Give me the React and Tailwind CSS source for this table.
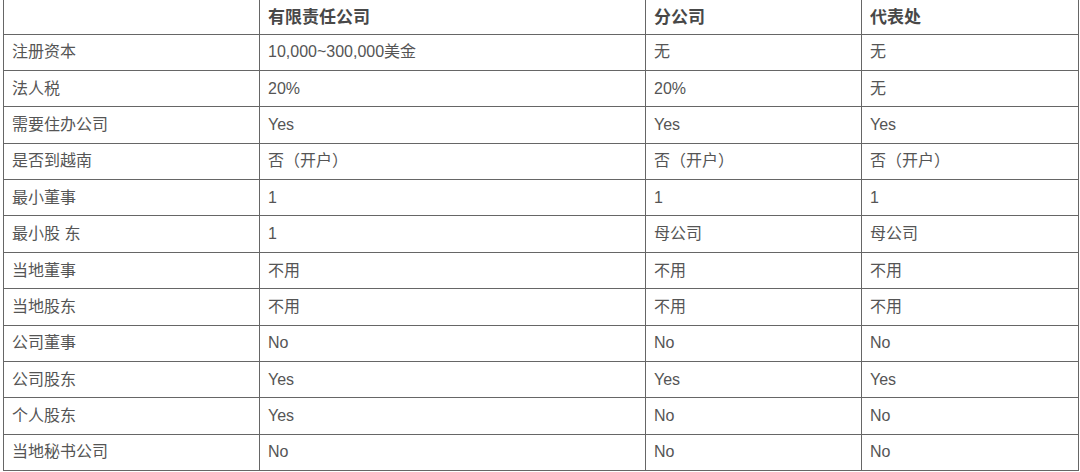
import React from 'react'

const rows = [
    ['注册资本', '10,000~300,000美金', '无', '无'],
    ['法人税', '20%', '20%', '无'],
    ['需要住办公司', 'Yes', 'Yes', 'Yes'],
    ['是否到越南', '否（开户）', '否（开户）', '否（开户）'],
    ['最小董事', '1', '1', '1'],
    ['最小股 东', '1', '母公司', '母公司'],
    ['当地董事', '不用', '不用', '不用'],
    ['当地股东', '不用', '不用', '不用'],
    ['公司董事', 'No', 'No', 'No'],
    ['公司股东', 'Yes', 'Yes', 'Yes'],
    ['个人股东', 'Yes', 'No', 'No'],
    ['当地秘书公司', 'No', 'No', 'No'],
]

const App = () => {
    return (
        <div className="w-[1080px] h-[472px] bg-white overflow-hidden font-['Liberation_Sans','Noto_Sans_CJK_SC',sans-serif]">
            <table className="ml-[3px] w-[1075px] table-fixed border-collapse text-left">
                <colgroup>
                    <col className="w-[256px]" />
                    <col className="w-[386px]" />
                    <col className="w-[216px]" />
                    <col className="w-[217px]" />
                </colgroup>
                <thead>
                    <tr className="h-[34px]">
                        <th className="border-x border-b border-[#666] pl-2"></th>
                        <th className="border-x border-b border-[#666] pl-2 pt-[1px] text-[17px] font-semibold text-[#484848]">有限责任公司</th>
                        <th className="border-x border-b border-[#666] pl-2 pt-[1px] text-[17px] font-semibold text-[#484848]">分公司</th>
                        <th className="border-x border-b border-[#666] pl-2 pt-[1px] text-[17px] font-semibold text-[#484848]">代表处</th>
                    </tr>
                </thead>
                <tbody>
                    {rows.map((r, i) => (
                        <tr key={i} className="h-[36.4px]">
                            {r.map((c, j) => (
                                <td key={j} className="border border-[#666] pl-2 text-[16px] text-[#555] leading-none">{c}</td>
                            ))}
                        </tr>
                    ))}
                </tbody>
            </table>
        </div>
    )
}

export default App
